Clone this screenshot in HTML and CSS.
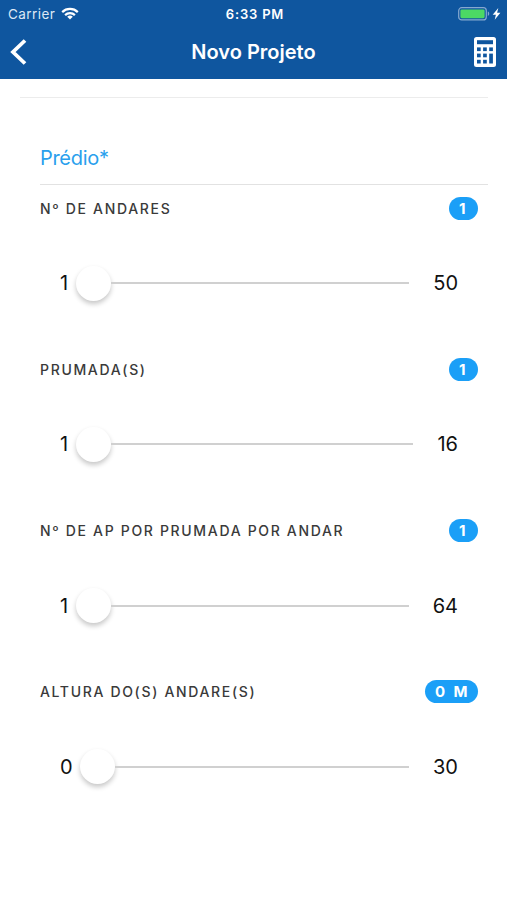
FILE: index.html
```html
<!DOCTYPE html>
<html lang="pt-BR">
<head>
    <meta charset="UTF-8">
    <meta name="viewport" content="width=device-width, initial-scale=1.0">
    <title>Novo Projeto</title>
    <link rel="stylesheet" href="styles.css">
</head>
<body>

    <header class="header">
        <div class="status-bar">
            <div class="carrier">
                <span>Carrier</span>
                <svg class="wifi" width="18" height="13" viewBox="0 0 18 13" fill="none" stroke="#fff" stroke-width="2.2">
                    <path d="M1.2 5.1a11.2 11.2 0 0 1 15.6 0"/>
                    <path d="M4.1 8.1a7 7 0 0 1 9.8 0"/>
                    <path d="M9 12.6L6.2 9.8a4 4 0 0 1 5.6 0z" fill="#fff" stroke="none"/>
                </svg>
            </div>
            <span class="time">6:33 PM</span>
            <div class="battery">
                <svg width="44" height="14" viewBox="0 0 44 14">
                    <rect x=".7" y=".7" width="27.6" height="12.2" rx="3" fill="none" stroke="#86a9d0" stroke-width="1.2"/>
                    <rect x="2.4" y="2.4" width="24.2" height="8.8" rx="1.4" fill="#4cd964"/>
                    <path d="M29.8 4.6c1.9.6 1.9 3.8 0 4.4z" fill="#86a9d0"/>
                    <path d="M40.3 1l-5.6 6.7h3.2l-1.2 5.1 5.7-7h-3.3z" fill="#fff"/>
                </svg>
            </div>
        </div>
        <div class="nav-bar">
            <svg class="back" width="17" height="26" viewBox="0 0 17 26" fill="none" stroke="#fff" stroke-width="3.8">
                <path d="M15 1.5L3 13l12 11.5"/>
            </svg>
            <h1 class="title">Novo Projeto</h1>
            <svg class="calculator" width="22" height="30" viewBox="0 0 22 30">
                <rect width="22" height="30" rx="2.5" fill="#fff"/>
                <g fill="#0f569f">
                    <rect x="3" y="3.2" width="16" height="4"/>
                    <rect x="3" y="10.4" width="3.7" height="3.7"/>
                    <rect x="9.1" y="10.4" width="3.7" height="3.7"/>
                    <rect x="15.2" y="10.4" width="3.7" height="3.7"/>
                    <rect x="3" y="16.6" width="3.7" height="3.7"/>
                    <rect x="9.1" y="16.6" width="3.7" height="3.7"/>
                    <rect x="3" y="22.8" width="3.7" height="3.7"/>
                    <rect x="9.1" y="22.8" width="3.7" height="3.7"/>
                    <rect x="15.2" y="16.6" width="3.7" height="9.9"/>
                </g>
            </svg>
        </div>
    </header>

    <main class="content">
        <h2 class="section-title">Prédio*</h2>

        <section class="field">
            <div class="field-header">
                <span class="label">Nº de andares</span>
                <span class="badge">1</span>
            </div>
            <div class="range">
                <span class="min">1</span>
                <div class="knob"></div>
                <div class="track"></div>
                <span class="max">50</span>
            </div>
        </section>

        <section class="field">
            <div class="field-header">
                <span class="label">Prumada(s)</span>
                <span class="badge">1</span>
            </div>
            <div class="range">
                <span class="min">1</span>
                <div class="knob"></div>
                <div class="track"></div>
                <span class="max">16</span>
            </div>
        </section>

        <section class="field">
            <div class="field-header">
                <span class="label">Nº de ap por prumada por andar</span>
                <span class="badge">1</span>
            </div>
            <div class="range">
                <span class="min">1</span>
                <div class="knob"></div>
                <div class="track"></div>
                <span class="max">64</span>
            </div>
        </section>

        <section class="field">
            <div class="field-header">
                <span class="label">Altura do(s) andare(s)</span>
                <span class="badge">0 m</span>
            </div>
            <div class="range">
                <span class="min">0</span>
                <div class="knob"></div>
                <div class="track"></div>
                <span class="max">30</span>
            </div>
        </section>
    </main>

</body>
</html>
```

FILE: styles.css
```css
* {
    box-sizing: border-box;
}

body {
    margin: 0;
    min-height: 100vh;
    background-color: #fff;
    color: #111;
    font-family: Inter, "Liberation Sans", sans-serif;
}

svg {
    display: block;
}

/* Header */
.header {
    height: 79px;
    background-color: #0f569f;
    color: #fff;
}

.status-bar {
    display: grid;
    grid-template-columns: 1fr auto 1fr;
    align-items: center;
    height: 27px;
    padding: 0 5px 0 8px;
    font-size: 13px;
}

.carrier {
    display: flex;
    align-items: center;
    gap: 6px;
    font-size: 13.5px;
    letter-spacing: 0.45px;
    color: #dce8f5;
}

.time {
    font-weight: 600;
    letter-spacing: 0.8px;
}

.battery {
    justify-self: end;
}

.nav-bar {
    display: flex;
    align-items: center;
    justify-content: space-between;
    height: 50px;
    padding: 0 11px 0 10px;
}

.title {
    margin: 0;
    padding-left: 6px;
    font-size: 20px;
    font-weight: 600;
}

/* Content */
.content {
    margin: 18px 19px 0 20px;
    padding-left: 20px;
    border-top: 1px solid #ececec;
}

.section-title {
    margin: 0;
    padding-top: 33px;
    height: 87px;
    border-bottom: 1px solid #e2e2e2;
    color: #2a9fed;
    font-size: 20px;
    font-weight: 400;
    line-height: 54px;
    letter-spacing: -0.3px;
}

.field {
    height: 161.3px;
}

.field-header {
    display: flex;
    align-items: center;
    justify-content: space-between;
    height: 46px;
    padding-right: 10px;
}

.label {
    color: #3a3a3a;
    font-size: 14px;
    font-weight: 500;
    letter-spacing: 1.67px;
    text-transform: uppercase;
}

.badge {
    min-width: 29px;
    height: 23px;
    padding: 0 9px 0 10px;
    border-radius: 12px;
    background-color: #1b9ff7;
    color: #fff;
    font-size: 15px;
    font-weight: 700;
    line-height: 23px;
    letter-spacing: 1.6px;
    word-spacing: 1.5px;
    text-transform: uppercase;
}

.range {
    display: flex;
    align-items: center;
    height: 104px;
    padding: 0 30px 0 20px;
    font-size: 20px;
}

.min {
    min-width: 9px;
}

.knob {
    width: 35px;
    height: 35px;
    margin-left: 7px;
    border-radius: 50%;
    background-color: #fff;
    box-shadow: 0 3px 5px rgba(0, 0, 0, 0.22);
}

.track {
    flex: 1;
    height: 2px;
    margin-right: 24px;
    background-color: #d0d0d0;
}
```
